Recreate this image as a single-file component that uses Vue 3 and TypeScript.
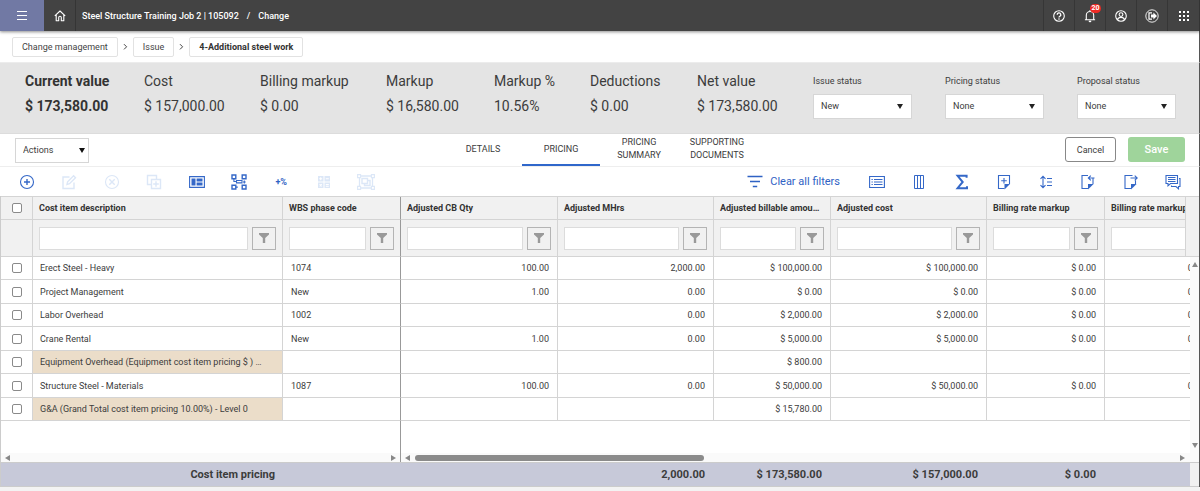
<script setup lang="ts">
import { ref } from 'vue'

interface Metric { label: string; value: string; strong?: boolean }
interface Status { id: string; label: string; options: string[] }
interface Column { title: string; width?: number }
interface Row { name: string; wbs: string; values: string[]; tinted?: boolean }

const metrics: Metric[] = [
  { label: 'Current value', value: '$ 173,580.00', strong: true },
  { label: 'Cost', value: '$ 157,000.00' },
  { label: 'Billing markup', value: '$ 0.00' },
  { label: 'Markup', value: '$ 16,580.00' },
  { label: 'Markup %', value: '10.56%' },
  { label: 'Deductions', value: '$ 0.00' },
  { label: 'Net value', value: '$ 173,580.00' },
]

const statuses: Status[] = [
  { id: 'issue', label: 'Issue status', options: ['New'] },
  { id: 'pricing', label: 'Pricing status', options: ['None'] },
  { id: 'proposal', label: 'Proposal status', options: ['None'] },
]

const tabs = ['DETAILS', 'PRICING', 'PRICING SUMMARY', 'SUPPORTING DOCUMENTS']
const activeTab = ref('PRICING')

const columns: Column[] = [
  { title: 'Cost item description', width: 250 },
  { title: 'WBS phase code', width: 118 },
  { title: 'Adjusted CB Qty', width: 157 },
  { title: 'Adjusted MHrs', width: 156 },
  { title: 'Adjusted billable amount', width: 117 },
  { title: 'Adjusted cost', width: 156 },
  { title: 'Billing rate markup', width: 118 },
  { title: 'Billing rate markup %' },
]

const rows: Row[] = [
  { name: 'Erect Steel - Heavy', wbs: '1074', values: ['100.00', '2,000.00', '$ 100,000.00', '$ 100,000.00', '$ 0.00', '0.00 %'] },
  { name: 'Project Management', wbs: 'New', values: ['1.00', '0.00', '$ 0.00', '$ 0.00', '$ 0.00', '0.00 %'] },
  { name: 'Labor Overhead', wbs: '1002', values: ['', '0.00', '$ 2,000.00', '$ 2,000.00', '$ 0.00', '0.00 %'] },
  { name: 'Crane Rental', wbs: 'New', values: ['1.00', '0.00', '$ 5,000.00', '$ 5,000.00', '$ 0.00', '0.00 %'] },
  { name: 'Equipment Overhead (Equipment cost item pricing $ ) - Level 0', wbs: '', values: ['', '', '$ 800.00', '', '', ''], tinted: true },
  { name: 'Structure Steel - Materials', wbs: '1087', values: ['100.00', '0.00', '$ 50,000.00', '$ 50,000.00', '$ 0.00', '0.00 %'] },
  { name: 'G&A (Grand Total cost item pricing 10.00%) - Level 0', wbs: '', values: ['', '', '$ 15,780.00', '', '', ''], tinted: true },
]

const totals = ['', '2,000.00', '$ 173,580.00', '$ 157,000.00', '$ 0.00', '']
</script>

<template>
  <div class="page">
    <header class="topbar">
      <button class="menu" aria-label="Menu">
        <svg width="12" height="12" viewBox="0 0 12 12"><path d="M1 1.5h10M1 5.5h10M1 9.5h10" stroke="#fff" stroke-width="1.2" /></svg>
      </button>
      <button class="home" aria-label="Home">
        <svg width="12" height="12" viewBox="0 0 12 12" fill="none" stroke="#fff" stroke-width="1.1" stroke-linejoin="round"><path d="M.8 5.8 6 1l5.2 4.8M2.2 4.8v6h2.500V7.600a1.300 1.300 0 0 1 2.600 0v3.200h2.500v-6" /></svg>
      </button>
      <div class="job">
        <span>Steel Structure Training Job 2 | 105092</span><span>/</span><span>Change</span>
      </div>
      <nav class="apps" aria-label="Application">
        <button aria-label="Help">
          <svg width="14" height="14" viewBox="0 0 14 14" fill="none" stroke="#fff" stroke-width="1.1"><circle cx="7" cy="7" r="5.3" /><path d="M5.2 5.8a1.8 1.8 0 1 1 2.7 1.5c-.6.4-.9.6-.9 1.2" stroke-width="1.3" /><circle cx="7" cy="10" r=".4" fill="#fff" stroke-width=".7" /></svg>
        </button>
        <button aria-label="Notifications">
          <svg width="14" height="14" viewBox="0 0 14 14" fill="none" stroke="#fff" stroke-width="1.1"><path d="M3.3 10.5V6.2a3.7 3.7 0 0 1 7.4 0v4.3M1.9 10.8h10.2M7 2.5V1" /><path d="M5.8 12.4h2.4" stroke-width="1.5" /></svg>
          <span class="badge">20</span>
        </button>
        <button aria-label="Profile">
          <svg width="14" height="14" viewBox="0 0 14 14" fill="none" stroke="#fff" stroke-width="1.1"><circle cx="7" cy="7" r="5.3" /><circle cx="7" cy="5.6" r="1.9" /><path d="M3.4 10.8c.5-1.8 2-2.4 3.6-2.4s3.1.6 3.6 2.4" /></svg>
        </button>
        <button aria-label="Sign out">
          <svg width="14" height="14" viewBox="0 0 14 14" fill="none" stroke="#fff"><circle cx="7" cy="7" r="6.2" stroke-width=".9" /><path d="M7 3.8H4v6.4h3" stroke-width="1.2" /><path d="M6 5.600h2.400V3.600L12 7l-3.600 3.400v-2H6z" fill="#fff" stroke="none" /></svg>
        </button>
        <button aria-label="All apps">
          <svg width="12" height="12" viewBox="0 0 12 12" fill="#fff"><path d="M1 1h2v2H1zM5 1h2v2H5zM9 1h2v2H9zM1 5h2v2H1zM5 5h2v2H5zM9 5h2v2H9zM1 9h2v2H1zM5 9h2v2H5zM9 9h2v2H9z" /></svg>
        </button>
      </nav>
    </header>

    <nav class="crumbs" aria-label="Breadcrumb">
      <a href="#">Change management</a>
      <svg width="5" height="8" viewBox="0 0 5 8"><path d="m1 1.2 2.6 2.6L1 6.4" fill="none" stroke="#444" /></svg>
      <a href="#">Issue</a>
      <svg width="5" height="8" viewBox="0 0 5 8"><path d="m1 1.2 2.6 2.6L1 6.4" fill="none" stroke="#444" /></svg>
      <a href="#" class="current" aria-current="page">4-Additional steel work</a>
    </nav>

    <section class="summary">
      <dl class="metrics">
        <div v-for="m in metrics" :key="m.label" :class="{ strong: m.strong }">
          <dt>{{ m.label }}</dt>
          <dd>{{ m.value }}</dd>
        </div>
      </dl>
      <div class="statuses">
        <div v-for="s in statuses" :key="s.id" class="status">
          <label :for="s.id">{{ s.label }}</label>
          <div class="select">
            <select :id="s.id"><option v-for="o in s.options" :key="o">{{ o }}</option></select>
            <svg width="6" height="5" viewBox="0 0 6 5"><path d="M0 0h6L3 5z" fill="#222" /></svg>
          </div>
        </div>
      </div>
    </section>

    <section class="tabbar">
      <div class="side">
        <div class="select actions">
          <select aria-label="Actions"><option>Actions</option></select>
          <svg width="6" height="5" viewBox="0 0 6 5"><path d="M0 0h6L3 5z" fill="#111" /></svg>
        </div>
      </div>
      <nav class="tabs" role="tablist">
        <button v-for="t in tabs" :key="t" role="tab" :aria-selected="t === activeTab" :class="{ active: t === activeTab }" @click="activeTab = t">{{ t }}</button>
      </nav>
      <div class="side end">
        <button class="cancel">Cancel</button>
        <button class="save">Save</button>
      </div>
    </section>

    <section class="toolbar">
      <div class="tools left">
        <button aria-label="Add">
          <svg width="16" height="16" viewBox="0 0 16 16"><circle cx="8" cy="8" r="6.5" /><path d="M8 5v6M5 8h6" stroke-width="1.4" /></svg>
        </button>
        <button aria-label="Edit" disabled>
          <svg width="16" height="16" viewBox="0 0 16 16"><path d="M8.5 3H2v11.500h11V8.500M6 10.500l.6-2.700 6-6 1.900 1.900-6 6z" stroke-width="1.4" /></svg>
        </button>
        <button aria-label="Remove" disabled>
          <svg width="16" height="16" viewBox="0 0 16 16"><circle cx="8" cy="8" r="6.5" /><path d="m5.3 5.3 5.4 5.4M10.7 5.3l-5.4 5.4" stroke-width="1.4" /></svg>
        </button>
        <button aria-label="Duplicate" disabled>
          <svg width="16" height="16" viewBox="0 0 16 16"><path d="M5 10.5H1.500v-9h9V5M5.500 5.500h9v9h-9zM10 7.200v5.600M7.200 10h5.600" stroke-width="1.4" /></svg>
        </button>
        <button aria-label="Card view">
          <svg width="16" height="16" viewBox="0 0 16 16"><path d="M.6 2.6h14.800v10.800H.6z" /><path class="solid" d="M2.5 4.5h4v7h-4zM7.600 4.500h5.900v3H7.600zM7.600 8.500h5.900v3H7.600z" /></svg>
        </button>
        <button aria-label="Breakdown structure">
          <svg width="16" height="16" viewBox="0 0 16 16"><path d="M1 1h3.800v3.800H1zM11.200 1H15v3.800h-3.800zM1 11.200h3.800V15H1zM11.200 11.200H15V15h-3.800z" stroke-width="1.4" /><path d="M2.900 4.800v2.700h3M5.500 6.500h5.500v2.400H5.500zM4.800 13.100h2M13.300 6.600v2.800M12 8h2.700" /></svg>
        </button>
        <button aria-label="Add percentage" class="percent">+%</button>
        <button aria-label="Calculate" disabled>
          <svg width="16" height="16" viewBox="0 0 16 16"><path class="tile" d="M2 2h5.500v5.500H2zM8.500 2H14v5.500H8.500zM2 8.500h5.500V14H2zM8.500 8.500H14V14H8.500z" /><path class="sign" d="M3.200 4.800h3M4.700 3.300v3M9.800 4.800h3M3.600 10.200l2.200 2.200M5.800 10.200l-2.200 2.200M9.800 10.500h3M9.800 12.200h3" /></svg>
        </button>
        <button aria-label="Group" disabled>
          <svg width="18" height="16" viewBox="0 0 18 16"><path d="M2.500 2h13v12h-13z" stroke-width="1.3" /><path d="M5 4.500h5.500v5H5zM7.500 9.500v2H13v-5h-2.500" stroke-width="1.4" /><path fill="#fff" d="M.6.6h3v3h-3zM14.400.6h3v3h-3zM.6 12.400h3v3h-3zM14.400 12.400h3v3h-3z" /></svg>
        </button>
      </div>
      <button class="clear">
        <svg width="16" height="14" viewBox="0 0 16 14" fill="none"><path d="M.5 1.500h15M3 6.500h10M5.800 11.500h4.400" stroke="#2f62c4" stroke-width="1.5" /></svg>
        Clear all filters
      </button>
      <div class="tools right">
        <button aria-label="List">
          <svg width="16" height="16" viewBox="0 0 16 16"><path d="M.6 2.500h14.800v11H.6z" /><path d="M5 5.500h8.500M5 8h8.500M5 10.500h8.500M2.500 5.500h1.300M2.500 8h1.300M2.500 10.500h1.300" /></svg>
        </button>
        <button aria-label="Columns">
          <svg width="16" height="16" viewBox="0 0 16 16"><path d="M3.500 1.500h9v13h-9zM6.500 1.500v13M9.500 1.500v13" stroke-width="1" /></svg>
        </button>
        <button aria-label="Totals">
          <svg width="16" height="16" viewBox="0 0 16 16"><path d="M12.600 3.800V1.800H3.600L8.700 8l-5.100 6.200h9.400v-2" stroke-width="2" /></svg>
        </button>
        <button aria-label="Add note">
          <svg width="16" height="16" viewBox="0 0 16 16"><path d="M8.500 14.500h-6v-13h11v8.500M8 4v5.500M5.200 6.800h5.600" /><path class="solid" d="M8.500 10H14l-5.500 5.500z" /></svg>
        </button>
        <button aria-label="Row height">
          <svg width="16" height="16" viewBox="0 0 16 16"><path d="M5 2.500v11M2.500 4.800 5 2.300l2.500 2.500M2.500 11.200 5 13.700l2.500-2.500M9 4.500h5M9 8h5M9 11.500h5" /></svg>
        </button>
        <button aria-label="Import">
          <svg width="16" height="16" viewBox="0 0 16 16"><path d="M8 1.500H2v13h6M13 4v6M14.500 4h-6M10.800 1.600 8.300 4l2.500 2.400" /><path class="solid" d="M8 10h5.600L8 15.500z" /></svg>
        </button>
        <button aria-label="Export">
          <svg width="16" height="16" viewBox="0 0 16 16"><path d="M9.500 1.500H2v13h6M12.500 6.500V10M7.500 4H14M11.700 1.600 14.200 4l-2.500 2.400" /><path class="solid" d="M8 10h5.600L8 15.500z" /></svg>
        </button>
        <button aria-label="Comments">
          <svg width="16" height="16" viewBox="0 0 16 16"><path d="M1 1.500h11.500v8h-7L3 11.800V9.500H1zM3 3.500h7.500M3 5.500h7.500M3 7.500h7.500" /><path d="M14 4.500h1v8h-1.500v2.300L11 12.500H6.500v-1" /></svg>
        </button>
      </div>
    </section>

    <main class="grid">
      <div class="head">
        <table>
          <colgroup><col class="tick" /><col v-for="c in columns" :key="c.title" :style="c.width ? { width: c.width + 'px' } : undefined" /></colgroup>
          <thead>
            <tr class="titles">
              <th><input type="checkbox" aria-label="Select all" /></th>
              <th v-for="c in columns" :key="c.title" scope="col">{{ c.title }}</th>
            </tr>
            <tr class="filters">
              <td></td>
              <td v-for="c in columns" :key="c.title">
                <div class="filter">
                  <input type="text" :aria-label="'Filter ' + c.title" />
                  <button :aria-label="'Filter options for ' + c.title"><svg width="10" height="10" viewBox="0 0 10 10"><path d="M0 0h10v1.500L6.200 5v5H3.800V5L0 1.500z" fill="#999" /></svg></button>
                </div>
              </td>
            </tr>
          </thead>
        </table>
      </div>

      <div class="body">
        <div class="rows">
          <table>
            <colgroup><col class="tick" /><col v-for="c in columns" :key="c.title" :style="c.width ? { width: c.width + 'px' } : undefined" /></colgroup>
            <tbody>
              <tr v-for="r in rows" :key="r.name">
                <td><input type="checkbox" :aria-label="'Select ' + r.name" /></td>
                <td :class="{ tinted: r.tinted }">{{ r.name }}</td>
                <td>{{ r.wbs }}</td>
                <td v-for="(v, i) in r.values" :key="i" class="num">{{ v }}</td>
              </tr>
            </tbody>
          </table>
          <div class="blank"></div>
        </div>
        <div class="vscroll">
          <svg width="6" height="5" viewBox="0 0 6 5"><path d="M0 5h6L3 0z" fill="#888" /></svg>
          <svg width="6" height="5" viewBox="0 0 6 5"><path d="M0 0h6L3 5z" fill="#888" /></svg>
        </div>
      </div>

      <div class="hscrolls">
        <div class="hscroll locked">
          <svg width="5" height="6" viewBox="0 0 5 6"><path d="M5 0v6L0 3z" fill="#888" /></svg>
          <svg width="5" height="6" viewBox="0 0 5 6"><path d="M0 0v6l5-3z" fill="#888" /></svg>
        </div>
        <div class="hscroll">
          <svg width="5" height="6" viewBox="0 0 5 6"><path d="M5 0v6L0 3z" fill="#888" /></svg>
          <div class="track"><div class="thumb"></div></div>
          <svg width="5" height="6" viewBox="0 0 5 6"><path d="M0 0v6l5-3z" fill="#888" /></svg>
        </div>
      </div>

      <div class="foot">
        <table>
          <colgroup><col class="tick" /><col v-for="c in columns" :key="c.title" :style="c.width ? { width: c.width + 'px' } : undefined" /></colgroup>
          <tfoot>
            <tr>
              <td></td>
              <th scope="row">Cost item pricing</th>
              <td></td>
              <td v-for="(t, i) in totals" :key="i">{{ t }}</td>
            </tr>
          </tfoot>
        </table>
      </div>
    </main>
  </div>
</template>

<style>
body {
  margin: 0;
  background: #f3f3f3;
}
</style>

<style scoped>
* {
  box-sizing: border-box;
}

.page {
  display: flex;
  flex-direction: column;
  min-height: 100vh;
  padding-bottom: 4px;
  font: 9px/12px Roboto, sans-serif;
  color: #3c3c3c;
}

button,
input,
select {
  margin: 0;
  padding: 0;
  border: 0;
  background: none;
  font: inherit;
  color: inherit;
}

button {
  display: flex;
  align-items: center;
  justify-content: center;
}

svg {
  display: block;
  flex: none;
}

/* Top bar */
.topbar {
  position: relative;
  display: flex;
  height: 31px;
  background: #434343;
  border-right: 1px solid #333;
  color: #fff;
  box-shadow: 0 1px 3px rgba(0, 0, 0, 0.45);
}

.menu {
  width: 44px;
  background: #7179a4;
}

.home {
  width: 32px;
  border-right: 1px solid #353535;
}

.job {
  display: flex;
  align-items: center;
  gap: 8px;
  padding-left: 6px;
  font-weight: 500;
}

.apps {
  display: flex;
  margin-left: auto;
}

.apps button {
  position: relative;
  width: 31px;
  border-left: 1px solid #363636;
}

.apps button:last-child {
  width: 32px;
}

.badge {
  position: absolute;
  top: 4px;
  left: 15px;
  width: 11px;
  height: 9px;
  border-radius: 5px;
  background: #ee2a24;
  font-size: 7px;
  line-height: 9px;
  font-weight: 700;
  text-align: center;
}

/* Breadcrumb */
.crumbs {
  display: flex;
  align-items: center;
  gap: 5px;
  height: 31px;
  padding-left: 12px;
  background: #fff;
  border-right: 1px solid #555;
}

.crumbs a {
  height: 20px;
  padding: 0 9px;
  border: 1px solid #e2e2e2;
  border-radius: 2px;
  line-height: 18px;
  color: #444;
  text-decoration: none;
}

.crumbs .current {
  font-weight: 700;
  color: #333;
}

/* Summary */
.summary {
  display: flex;
  justify-content: space-between;
  height: 72px;
  padding: 9px 23px 0 25px;
  background: #e4e4e4;
  border-top: 1px solid #ececec;
  border-bottom: 1px solid #dcdcdc;
  border-right: 1px solid #555;
}

.metrics {
  display: grid;
  grid-template-columns: 119px 116px 126px 108px 96px 107px auto;
  margin: 0;
  font-size: 14px;
  line-height: 18px;
  color: #3c3c3c;
  white-space: nowrap;
}

.metrics dt {
  margin-bottom: 7px;
}

.metrics dd {
  margin: 0;
}

.metrics .strong {
  font-weight: 700;
  color: #333;
}

.statuses {
  display: flex;
  gap: 33px;
}

.status label {
  display: block;
  line-height: 18px;
  margin-bottom: 4px;
}

.select {
  position: relative;
  width: 99px;
}

.select select {
  display: block;
  width: 100%;
  height: 25px;
  padding: 0 7px 2px;
  border: 1px solid #d6d6d6;
  background: #fff;
  appearance: none;
}

.select svg {
  position: absolute;
  top: 10px;
  right: 9px;
  pointer-events: none;
}

/* Tabs */
.tabbar {
  display: flex;
  height: 33px;
  background: #fff;
  border-bottom: 1px solid #eee;
  border-right: 1px solid #555;
}

.side {
  flex: 1;
  display: flex;
  align-items: center;
  padding-left: 15px;
}

.side.end {
  justify-content: flex-end;
  gap: 12px;
  padding: 0 14px 1px 0;
}

.actions {
  width: 74px;
}

.actions select {
  padding-bottom: 0;
}

.actions svg {
  right: 4px;
}

.tabs {
  display: flex;
}

.tabs button {
  width: 78px;
  padding: 0 8px;
  line-height: 13px;
  border-bottom: 2px solid transparent;
  text-align: center;
}

.tabs .active {
  border-color: #2f67cb;
}

.cancel,
.save {
  height: 25px;
  border-radius: 3px;
}

.cancel {
  width: 51px;
  border: 1px solid #888;
}

.save {
  width: 57px;
  background: #9fd49b;
  color: #fff;
  font-size: 11px;
  font-weight: 500;
}

/* Toolbar */
.toolbar {
  display: flex;
  align-items: center;
  height: 29px;
  padding: 0 15px 0 16px;
  background: #fff;
  border-right: 1px solid #555;
}

.tools {
  display: flex;
  justify-content: space-between;
}

.tools button {
  width: 22px;
  height: 22px;
}

.tools.left {
  width: 361px;
}

.tools.right {
  width: 318px;
}

.tools svg {
  fill: none;
  stroke: #3568c8;
  stroke-width: 1.1;
}

.tools .solid {
  fill: #3568c8;
  stroke: none;
}

.tools button:disabled svg {
  stroke: #dce7f7;
}

.tools .tile {
  fill: #dce7f7;
  stroke: none;
}

.tools .sign {
  stroke: #fff;
}

.tools .percent {
  font-weight: 700;
  color: #2f62c4;
}

.clear {
  gap: 7px;
  margin-left: auto;
  margin-right: 26px;
  font-size: 11px;
  line-height: 14px;
  color: #2f62c4;
}

/* Data grid */
.grid {
  flex: 1;
  display: flex;
  flex-direction: column;
  background: #fff;
  border-left: 1px solid #ccc;
  border-right: 1px solid #555;
}

table {
  width: 100%;
  min-width: 1222px;
  table-layout: fixed;
  border-collapse: separate;
  border-spacing: 0;
}

.tick {
  width: 32px;
}

th,
td {
  padding: 0 7px;
  border-right: 1px solid #d4d4d4;
  border-bottom: 1px solid #d4d4d4;
  text-align: left;
  white-space: nowrap;
  overflow: hidden;
  text-overflow: ellipsis;
}

.head tr > :nth-child(3),
.rows tr > :nth-child(3) {
  border-right-color: #999;
}

input[type='checkbox'] {
  display: block;
  appearance: none;
  width: 10px;
  height: 10px;
  margin: 0 auto;
  border: 1px solid #8a8a8a;
  border-radius: 2px;
  background: #fff;
}

.head {
  display: grid;
  overflow: hidden;
  padding-right: 12px;
  background: #f1f1f1;
  border-top: 1px solid #d4d4d4;
  position: relative;
}

.head::after {
  content: '';
  position: absolute;
  top: 0;
  right: 0;
  bottom: 0;
  width: 13px;
  background: #f1f1f1;
  border-left: 1px solid #d4d4d4;
  border-bottom: 1px solid #d4d4d4;
}

.titles th {
  height: 23px;
  padding: 0 10px 0 6px;
  font-weight: 700;
  color: #333;
}

.filters td {
  height: 37px;
  padding: 0 6px;
}

.filter {
  display: flex;
  gap: 4px;
}

.filter input {
  flex: 1;
  min-width: 0;
  height: 23px;
  border: 1px solid #dcdcdc;
  background: #fff;
}

.filter button {
  width: 24px;
  height: 23px;
  border: 1px solid #b4b4b4;
}

.body {
  flex: 1;
  display: flex;
}

.rows {
  flex: 1;
  min-width: 0;
  display: flex;
  flex-direction: column;
  overflow: hidden;
}

.rows td {
  height: 23px;
}

.rows tr:nth-child(even) td {
  height: 24px;
}

.rows td:nth-child(2) {
  padding-right: 20px;
}

.rows td:nth-child(3) {
  padding-left: 8px;
}

.rows td.num {
  padding-right: 8px;
  text-align: right;
}

.titles th:first-child,
.rows td:first-child {
  padding: 0;
}

.rows .tinted {
  background: #ebddc9;
}

.blank {
  flex: 1;
  width: 400px;
  min-height: 24px;
  border-right: 1px solid #999;
}

.vscroll {
  display: flex;
  flex-direction: column;
  align-items: center;
  justify-content: space-between;
  width: 9px;
  padding: 5px 0;
  background: #fafafa;
}

.hscrolls {
  display: flex;
  height: 9px;
  background: #fafafa;
}

.hscroll {
  flex: 1;
  display: flex;
  align-items: center;
  gap: 5px;
  padding: 0 14px 0 4px;
}

.hscroll.locked {
  flex: none;
  justify-content: space-between;
  width: 400px;
  padding-right: 4px;
  border-right: 1px solid #999;
}

.track {
  flex: 1;
}

.thumb {
  width: 38%;
  height: 6px;
  border-radius: 3px;
  background: #8b8b8b;
}

.foot {
  display: grid;
  overflow: hidden;
  padding-right: 9px;
  background: #f1f1f1;
  border-top: 1px solid #ccc;
  border-bottom: 1px solid #ccc;
  position: relative;
}

.foot::after {
  content: '';
  position: absolute;
  top: 0;
  right: 0;
  bottom: 0;
  width: 9px;
  background: #f1f1f1;
}

.foot tr {
  background: #c7c9d9;
}

.foot td,
.foot th {
  height: 23px;
  padding: 0 9px;
  border: 0;
  font-size: 11px;
  font-weight: 700;
  text-align: right;
}

.foot th {
  padding-right: 8px;
}
</style>
